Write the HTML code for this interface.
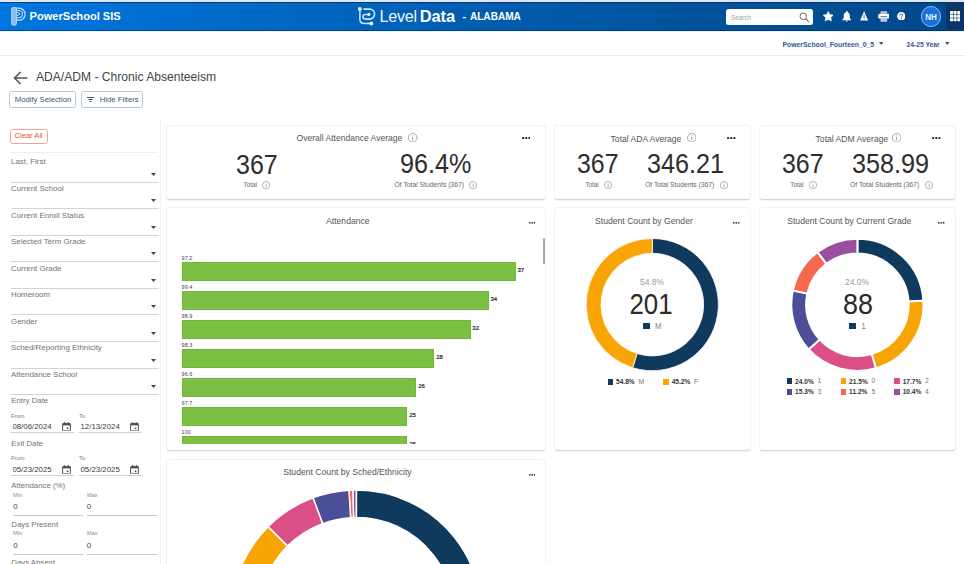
<!DOCTYPE html><html><head><meta charset="utf-8"><style>
html,body{margin:0;padding:0;background:#fff;width:964px;height:564px;overflow:hidden;position:relative;font-family:"Liberation Sans",sans-serif}
.t{position:absolute;line-height:1;white-space:nowrap}
</style></head><body>
<div style="position:absolute;left:0px;top:0px;width:964px;height:2px;background:#dfe7f3"></div>
<div style="position:absolute;left:0px;top:2px;width:964px;height:29px;background:linear-gradient(90deg,#0076e0 0px,#006ed0 146px,#0066c0 306px,#00539c 686px,#004a8c 910px,#00478a 964px)"></div>
<div style="position:absolute;left:0px;top:2px;width:964px;height:1px;background:rgba(0,30,80,.55)"></div>
<div style="position:absolute;left:0px;top:30px;width:964px;height:1px;background:rgba(0,25,70,.45)"></div>
<div style="position:absolute;left:0px;top:31px;width:964px;height:1px;background:#e9f4ff"></div>
<div style="position:absolute;left:945.7px;top:2px;width:18.3px;height:29px;background:#0a3566"></div>
<svg style="position:absolute;left:8px;top:4px" width="22" height="24" viewBox="0 0 22 24">
<rect x="3.5" y="3.4" width="5" height="17.8" rx="1.6" fill="#8dbbf0" stroke="#c0dbfa" stroke-width=".8"/>
<path d="M8.2 4.2 H11.1 A6 6 0 0 1 11.1 16.2 H8.2" fill="none" stroke="#c6e0fb" stroke-width="1.25"/>
<path d="M8.6 6.5 H10.9 A3.6 3.6 0 0 1 10.9 13.7 H8.6" fill="none" stroke="#c6e0fb" stroke-width="1.15"/>
<path d="M9.1 8.1 L11.9 9.9 L9.1 11.8" fill="none" stroke="#c6e0fb" stroke-width="1"/>
</svg>
<div class="t" style="left:29.50px;top:11.00px;font-size:11.1px;color:#fff;font-weight:700;">PowerSchool SIS</div>
<svg style="position:absolute;left:355px;top:5px" width="24" height="23" viewBox="0 0 24 23">
<g fill="none" stroke="#cde6ff" stroke-width="1.55" stroke-linecap="round">
<path d="M4.9 3.9 V14.3 Q4.9 18.5 9.1 18.5 H16.3"/>
<path d="M8.9 4.1 H14.6 A5 5 0 0 1 14.6 14.1 H10.6 Q7.8 14.1 7.8 11.6 Q7.8 9.4 10.6 9.4 H13.9"/>
</g>
<circle cx="4.9" cy="3.9" r="2" fill="#dcefe6"/>
<circle cx="16.3" cy="18.5" r="2" fill="#dcefe6"/>
<circle cx="13.9" cy="9.4" r="1.6" fill="#dcefe6"/>
</svg>
<div class="t" style="left:379.60px;top:8.49px;font-size:16.2px;color:#eaf4ff;letter-spacing:-0.3px;">Level</div>
<div class="t" style="left:419.80px;top:8.32px;font-size:16.4px;color:#fff;font-weight:700;letter-spacing:-0.1px;">Data</div>
<div class="t" style="left:462.50px;top:11.63px;font-size:10px;color:#fff;font-weight:700;">-</div>
<div class="t" style="left:469.90px;top:11.55px;font-size:10.1px;color:#fff;font-weight:700;">ALABAMA</div>
<div style="position:absolute;left:725.7px;top:8.7px;width:87.7px;height:16.6px;background:#fff;border-radius:2.5px"></div>
<div class="t" style="left:730.90px;transform:scaleX(0.94);transform-origin:0 0;top:14.53px;font-size:6.7px;color:#a0a0a0;">Search</div>
<svg style="position:absolute;left:799px;top:12px" width="11" height="11" viewBox="0 0 11 11">
<circle cx="4.3" cy="4.3" r="3.3" fill="none" stroke="#666" stroke-width="1"/>
<path d="M6.7 6.7 L9.8 9.8" stroke="#666" stroke-width="1.1"/></svg>
<svg style="position:absolute;left:822.5px;top:10.5px" width="10.5" height="11" viewBox="0 0 10.5 11">
<path d="M5.25 0.40 L6.87 3.53 L10.34 4.10 L7.87 6.60 L8.39 10.08 L5.25 8.50 L2.11 10.08 L2.63 6.60 L0.16 4.10 L3.63 3.53Z" fill="#fff" stroke="#fff" stroke-width=".5" stroke-linejoin="round"/></svg>
<svg style="position:absolute;left:841.5px;top:10.5px" width="9.5" height="11" viewBox="0 0 19 22">
<circle cx="9.5" cy="2.2" r="2" fill="#fff"/>
<path d="M9.5 2.6 Q3.4 2.6 3.4 9.6 V13.4 Q3.4 15.4 0.8 17 V18.3 H18.2 V17 Q15.6 15.4 15.6 13.4 V9.6 Q15.6 2.6 9.5 2.6Z" fill="#fff"/>
<rect x="8" y="18.3" width="3" height="3" rx="1" fill="#dfe9f5"/></svg>
<svg style="position:absolute;left:860.4px;top:11px" width="8.2" height="9.6" viewBox="0 0 16.4 19.2">
<path d="M8.2 0.6 L16.2 18.8 H0.2 Z" fill="#fff"/>
<rect x="7.4" y="7.5" width="1.6" height="6.5" fill="#233f66"/><rect x="7.4" y="15.2" width="1.6" height="1.6" fill="#233f66"/></svg>
<svg style="position:absolute;left:877.6px;top:10.8px" width="11.6" height="11" viewBox="0 0 23.2 22">
<rect x="5" y="0.3" width="13.2" height="5" rx="1.2" fill="#b9cbe3"/>
<rect x="0.3" y="5.3" width="22.6" height="10" rx="3.5" fill="#fff"/>
<rect x="5" y="10.5" width="13.2" height="1.6" fill="#3d5f8c"/>
<rect x="5" y="13.5" width="13.2" height="8.2" rx="1" fill="#b9cbe3"/></svg>
<svg style="position:absolute;left:896.9px;top:11.8px" width="8.6" height="8.6" viewBox="0 0 20 20">
<circle cx="10" cy="10" r="9.8" fill="#fff"/>
<path d="M6.9 7.7 Q6.9 4.6 10 4.6 Q13.2 4.6 13.2 7.4 Q13.2 9 11.2 10 Q10.2 10.6 10.2 12.2" fill="none" stroke="#2a4a78" stroke-width="2"/>
<circle cx="10.2" cy="15.2" r="1.3" fill="#2a4a78"/></svg>
<div style="position:absolute;left:920.6px;top:6.3px;width:20.4px;height:20.4px;box-sizing:border-box;border-radius:50%;background:#1a70d8;border:1.7px solid #8fc0f6"></div>
<div class="t" style="left:931.10px;transform:translateX(-50%) scaleX(0.97);top:12.87px;font-size:8.3px;color:#eef6ff;font-weight:700;">NH</div>
<svg style="position:absolute;left:950px;top:11.2px" width="10.4" height="10.4" viewBox="0 0 10.4 10.4"><rect x="0.0" y="0.0" width="3.1" height="3.1" rx=".5" fill="#fff"/><rect x="3.6" y="0.0" width="3.1" height="3.1" rx=".5" fill="#fff"/><rect x="7.2" y="0.0" width="3.1" height="3.1" rx=".5" fill="#fff"/><rect x="0.0" y="3.6" width="3.1" height="3.1" rx=".5" fill="#fff"/><rect x="3.6" y="3.6" width="3.1" height="3.1" rx=".5" fill="#fff"/><rect x="7.2" y="3.6" width="3.1" height="3.1" rx=".5" fill="#fff"/><rect x="0.0" y="7.2" width="3.1" height="3.1" rx=".5" fill="#fff"/><rect x="3.6" y="7.2" width="3.1" height="3.1" rx=".5" fill="#fff"/><rect x="7.2" y="7.2" width="3.1" height="3.1" rx=".5" fill="#fff"/></svg>
<div class="t" style="left:782.50px;top:41.70px;font-size:6.85px;color:#2a5a90;font-weight:700;">PowerSchool_Fourteen_0_5</div>
<svg style="position:absolute;left:878.6px;top:41.8px" width="4.6" height="3" viewBox="0 0 4.6 3"><path d="M0 0H4.6L2.3 3Z" fill="#2a5a90"/></svg>
<div class="t" style="left:906.40px;top:41.79px;font-size:6.75px;color:#2a5a90;font-weight:700;">24-25 Year</div>
<svg style="position:absolute;left:945.3px;top:41.8px" width="4.6" height="3" viewBox="0 0 4.6 3"><path d="M0 0H4.6L2.3 3Z" fill="#2a5a90"/></svg>
<div style="position:absolute;left:0px;top:55px;width:964px;height:1px;background:#e9ecef"></div>
<svg style="position:absolute;left:13px;top:70.5px" width="15" height="14" viewBox="0 0 15 14">
<path d="M14.5 7 H1.8 M7.6 1 L1.5 7 L7.6 13" fill="none" stroke="#555" stroke-width="1.6"/></svg>
<div class="t" style="left:36.00px;top:70.86px;font-size:12.1px;color:#444;">ADA/ADM - Chronic Absenteeism</div>
<div style="position:absolute;left:9.2px;top:91.3px;width:66.5px;height:16.3px;box-sizing:border-box;border:1px solid #b9c8d3;border-radius:2.5px"></div>
<div class="t" style="left:14.80px;top:95.78px;font-size:7.7px;color:#3d566b;">Modify Selection</div>
<div style="position:absolute;left:80.5px;top:91.3px;width:62.9px;height:16.3px;box-sizing:border-box;border:1px solid #b9c8d3;border-radius:2.5px"></div>
<svg style="position:absolute;left:87px;top:97.3px" width="7" height="5" viewBox="0 0 7 5"><path d="M0 .5H7M1.4 2.5H5.6M2.6 4.5H4.4" stroke="#3d566b" stroke-width="1"/></svg>
<div class="t" style="left:99.80px;top:95.78px;font-size:7.7px;color:#3d566b;">Hide Filters</div>
<div style="position:absolute;left:160px;top:118px;width:1px;height:446px;background:#f3f3f3"></div>
<div style="position:absolute;left:9.6px;top:128.5px;width:38.4px;height:15.9px;box-sizing:border-box;border:1px solid #f0a58e;border-radius:2.5px"></div>
<div class="t" style="left:14.50px;top:132.27px;font-size:7.6px;color:#e8582c;">Clear All</div>
<div style="position:absolute;left:10px;top:151.5px;width:148px;height:1px;background:#eeeeee"></div>
<div class="t" style="left:11.00px;top:158.41px;font-size:7.9px;color:#737373;">Last, First</div>
<div style="position:absolute;left:11px;top:182px;width:147.5px;height:1px;background:#d3d3d3"></div>
<svg style="position:absolute;left:150.5px;top:173.2px" width="5" height="3" viewBox="0 0 5 3"><path d="M0 0H5L2.5 3Z" fill="#444"/></svg>
<div class="t" style="left:11.00px;top:184.96px;font-size:7.9px;color:#737373;">Current School</div>
<div style="position:absolute;left:11px;top:208px;width:147.5px;height:1px;background:#d3d3d3"></div>
<svg style="position:absolute;left:150.5px;top:199.2px" width="5" height="3" viewBox="0 0 5 3"><path d="M0 0H5L2.5 3Z" fill="#444"/></svg>
<div class="t" style="left:11.00px;top:211.51px;font-size:7.9px;color:#737373;">Current Enroll Status</div>
<div style="position:absolute;left:11px;top:235px;width:147.5px;height:1px;background:#d3d3d3"></div>
<svg style="position:absolute;left:150.5px;top:226.2px" width="5" height="3" viewBox="0 0 5 3"><path d="M0 0H5L2.5 3Z" fill="#444"/></svg>
<div class="t" style="left:11.00px;top:238.06px;font-size:7.9px;color:#737373;">Selected Term Grade</div>
<div style="position:absolute;left:11px;top:261px;width:147.5px;height:1px;background:#d3d3d3"></div>
<svg style="position:absolute;left:150.5px;top:252.2px" width="5" height="3" viewBox="0 0 5 3"><path d="M0 0H5L2.5 3Z" fill="#444"/></svg>
<div class="t" style="left:11.00px;top:264.61px;font-size:7.9px;color:#737373;">Current Grade</div>
<div style="position:absolute;left:11px;top:288px;width:147.5px;height:1px;background:#d3d3d3"></div>
<svg style="position:absolute;left:150.5px;top:279.2px" width="5" height="3" viewBox="0 0 5 3"><path d="M0 0H5L2.5 3Z" fill="#444"/></svg>
<div class="t" style="left:11.00px;top:291.16px;font-size:7.9px;color:#737373;">Homeroom</div>
<div style="position:absolute;left:11px;top:314px;width:147.5px;height:1px;background:#d3d3d3"></div>
<svg style="position:absolute;left:150.5px;top:305.2px" width="5" height="3" viewBox="0 0 5 3"><path d="M0 0H5L2.5 3Z" fill="#444"/></svg>
<div class="t" style="left:11.00px;top:317.71px;font-size:7.9px;color:#737373;">Gender</div>
<div style="position:absolute;left:11px;top:341px;width:147.5px;height:1px;background:#d3d3d3"></div>
<svg style="position:absolute;left:150.5px;top:332.2px" width="5" height="3" viewBox="0 0 5 3"><path d="M0 0H5L2.5 3Z" fill="#444"/></svg>
<div class="t" style="left:11.00px;top:344.26px;font-size:7.9px;color:#737373;">Sched/Reporting Ethnicity</div>
<div style="position:absolute;left:11px;top:368px;width:147.5px;height:1px;background:#d3d3d3"></div>
<svg style="position:absolute;left:150.5px;top:359.2px" width="5" height="3" viewBox="0 0 5 3"><path d="M0 0H5L2.5 3Z" fill="#444"/></svg>
<div class="t" style="left:11.00px;top:370.81px;font-size:7.9px;color:#737373;">Attendance School</div>
<div style="position:absolute;left:11px;top:394px;width:147.5px;height:1px;background:#d3d3d3"></div>
<svg style="position:absolute;left:150.5px;top:385.2px" width="5" height="3" viewBox="0 0 5 3"><path d="M0 0H5L2.5 3Z" fill="#444"/></svg>
<div class="t" style="left:11.30px;top:397.00px;font-size:7.8px;color:#737373;">Entry Date</div>
<div class="t" style="left:11.30px;transform:scaleX(0.95);transform-origin:0 0;top:413.04px;font-size:6.1px;color:#777;">From</div>
<div class="t" style="left:79.30px;transform:scaleX(0.95);transform-origin:0 0;top:413.04px;font-size:6.1px;color:#777;">To</div>
<div class="t" style="left:12.40px;top:422.85px;font-size:7.85px;color:#3b3b3b;">08/06/2024</div>
<div class="t" style="left:80.50px;top:422.85px;font-size:7.85px;color:#3b3b3b;">12/13/2024</div>
<svg style="position:absolute;left:62.2px;top:421.9px" width="9" height="9.5" viewBox="0 0 18 19">
<rect x="1.2" y="2.8" width="15.6" height="15" rx="1.6" fill="none" stroke="#505050" stroke-width="2"/>
<rect x="1.2" y="2.8" width="15.6" height="4" fill="#505050"/>
<rect x="4.2" y="0.3" width="2" height="4" fill="#505050"/><rect x="11.8" y="0.3" width="2" height="4" fill="#505050"/>
<rect x="9.5" y="11" width="3.2" height="3.2" fill="#505050"/></svg>
<svg style="position:absolute;left:129.5px;top:421.9px" width="9" height="9.5" viewBox="0 0 18 19">
<rect x="1.2" y="2.8" width="15.6" height="15" rx="1.6" fill="none" stroke="#505050" stroke-width="2"/>
<rect x="1.2" y="2.8" width="15.6" height="4" fill="#505050"/>
<rect x="4.2" y="0.3" width="2" height="4" fill="#505050"/><rect x="11.8" y="0.3" width="2" height="4" fill="#505050"/>
<rect x="9.5" y="11" width="3.2" height="3.2" fill="#505050"/></svg>
<div style="position:absolute;left:11.3px;top:432px;width:62.6px;height:1px;background:#d0d0d0"></div>
<div style="position:absolute;left:78.8px;top:432px;width:62.2px;height:1px;background:#d0d0d0"></div>
<div class="t" style="left:11.30px;top:439.50px;font-size:7.8px;color:#737373;">Exit Date</div>
<div class="t" style="left:11.30px;transform:scaleX(0.95);transform-origin:0 0;top:455.34px;font-size:6.1px;color:#777;">From</div>
<div class="t" style="left:79.30px;transform:scaleX(0.95);transform-origin:0 0;top:455.34px;font-size:6.1px;color:#777;">To</div>
<div class="t" style="left:12.40px;top:465.55px;font-size:7.85px;color:#3b3b3b;">05/23/2025</div>
<div class="t" style="left:80.50px;top:465.55px;font-size:7.85px;color:#3b3b3b;">05/23/2025</div>
<svg style="position:absolute;left:62.2px;top:464.6px" width="9" height="9.5" viewBox="0 0 18 19">
<rect x="1.2" y="2.8" width="15.6" height="15" rx="1.6" fill="none" stroke="#505050" stroke-width="2"/>
<rect x="1.2" y="2.8" width="15.6" height="4" fill="#505050"/>
<rect x="4.2" y="0.3" width="2" height="4" fill="#505050"/><rect x="11.8" y="0.3" width="2" height="4" fill="#505050"/>
<rect x="9.5" y="11" width="3.2" height="3.2" fill="#505050"/></svg>
<svg style="position:absolute;left:129.5px;top:464.6px" width="9" height="9.5" viewBox="0 0 18 19">
<rect x="1.2" y="2.8" width="15.6" height="15" rx="1.6" fill="none" stroke="#505050" stroke-width="2"/>
<rect x="1.2" y="2.8" width="15.6" height="4" fill="#505050"/>
<rect x="4.2" y="0.3" width="2" height="4" fill="#505050"/><rect x="11.8" y="0.3" width="2" height="4" fill="#505050"/>
<rect x="9.5" y="11" width="3.2" height="3.2" fill="#505050"/></svg>
<div style="position:absolute;left:11.3px;top:475px;width:62.6px;height:1px;background:#d0d0d0"></div>
<div style="position:absolute;left:78.8px;top:475px;width:62.2px;height:1px;background:#d0d0d0"></div>
<div class="t" style="left:11.30px;top:482.40px;font-size:7.8px;color:#737373;">Attendance (%)</div>
<div class="t" style="left:13.30px;transform:scaleX(0.95);transform-origin:0 0;top:492.61px;font-size:5.9px;color:#888;">Min</div>
<div class="t" style="left:86.80px;transform:scaleX(0.95);transform-origin:0 0;top:492.61px;font-size:5.9px;color:#888;">Max</div>
<div class="t" style="left:13.30px;top:503.35px;font-size:7.85px;color:#3b3b3b;">0</div>
<div class="t" style="left:86.80px;top:503.35px;font-size:7.85px;color:#3b3b3b;">0</div>
<div style="position:absolute;left:13.3px;top:515.3px;width:69.7px;height:1px;background:#c9c9c9"></div>
<div style="position:absolute;left:86.6px;top:515.3px;width:70.2px;height:1px;background:#c9c9c9"></div>
<div class="t" style="left:11.30px;top:520.90px;font-size:7.8px;color:#737373;">Days Present</div>
<div class="t" style="left:13.30px;transform:scaleX(0.95);transform-origin:0 0;top:531.11px;font-size:5.9px;color:#888;">Min</div>
<div class="t" style="left:86.80px;transform:scaleX(0.95);transform-origin:0 0;top:531.11px;font-size:5.9px;color:#888;">Max</div>
<div class="t" style="left:13.30px;top:541.85px;font-size:7.85px;color:#3b3b3b;">0</div>
<div class="t" style="left:86.80px;top:541.85px;font-size:7.85px;color:#3b3b3b;">0</div>
<div style="position:absolute;left:13.3px;top:553.8px;width:69.7px;height:1px;background:#c9c9c9"></div>
<div style="position:absolute;left:86.6px;top:553.8px;width:70.2px;height:1px;background:#c9c9c9"></div>
<div class="t" style="left:11.30px;top:558.90px;font-size:7.8px;color:#737373;">Days Absent</div>
<div style="position:absolute;left:167px;top:126px;width:378px;height:72.5px;background:#fff;border-radius:2px;box-shadow:0 0.8px 1.6px rgba(0,0,0,.2), 0 0 1px rgba(0,0,0,.09)"></div>
<div style="position:absolute;left:555px;top:126px;width:195px;height:72.5px;background:#fff;border-radius:2px;box-shadow:0 0.8px 1.6px rgba(0,0,0,.2), 0 0 1px rgba(0,0,0,.09)"></div>
<div style="position:absolute;left:760px;top:126px;width:195px;height:72.5px;background:#fff;border-radius:2px;box-shadow:0 0.8px 1.6px rgba(0,0,0,.2), 0 0 1px rgba(0,0,0,.09)"></div>
<div class="t" style="left:296.50px;top:134.05px;font-size:8.56px;color:#555;">Overall Attendance Average</div>
<svg style="position:absolute;left:408.35px;top:132.85px" width="9.5" height="9.5" viewBox="0 0 20 20">
<circle cx="10" cy="10" r="9" fill="none" stroke="#777" stroke-width="1.3"/>
<rect x="9.2" y="8.5" width="1.6" height="6.5" fill="#777"/><circle cx="10" cy="5.8" r="1" fill="#777"/></svg>
<svg style="position:absolute;left:521.8px;top:136.88px" width="8.54" height="2.24"><circle cx="1.12" cy="1.12" r="1.12" fill="#222"/><circle cx="4.27" cy="1.12" r="1.12" fill="#222"/><circle cx="7.42" cy="1.12" r="1.12" fill="#222"/></svg>
<div class="t" style="left:236.00px;transform:scaleX(0.91);transform-origin:0 0;top:150.52px;font-size:27.5px;color:#2e2e2e;">367</div>
<div class="t" style="left:400.00px;transform:scaleX(0.915);transform-origin:0 0;top:150.32px;font-size:27.5px;color:#2e2e2e;">96.4%</div>
<div class="t" style="left:243.50px;top:182.27px;font-size:6.3px;color:#666;">Total</div>
<svg style="position:absolute;left:261.50px;top:181.30px" width="8.2" height="8.2" viewBox="0 0 20 20">
<circle cx="10" cy="10" r="9" fill="none" stroke="#777" stroke-width="1.3"/>
<rect x="9.2" y="8.5" width="1.6" height="6.5" fill="#777"/><circle cx="10" cy="5.8" r="1" fill="#777"/></svg>
<div class="t" style="left:394.60px;top:181.89px;font-size:6.75px;color:#666;">Of Total Students (367)</div>
<svg style="position:absolute;left:468.60px;top:181.10px" width="8.2" height="8.2" viewBox="0 0 20 20">
<circle cx="10" cy="10" r="9" fill="none" stroke="#777" stroke-width="1.3"/>
<rect x="9.2" y="8.5" width="1.6" height="6.5" fill="#777"/><circle cx="10" cy="5.8" r="1" fill="#777"/></svg>
<div class="t" style="left:610.60px;top:134.54px;font-size:8.57px;color:#555;">Total ADA Average</div>
<svg style="position:absolute;left:686.65px;top:132.85px" width="9.5" height="9.5" viewBox="0 0 20 20">
<circle cx="10" cy="10" r="9" fill="none" stroke="#777" stroke-width="1.3"/>
<rect x="9.2" y="8.5" width="1.6" height="6.5" fill="#777"/><circle cx="10" cy="5.8" r="1" fill="#777"/></svg>
<svg style="position:absolute;left:727px;top:136.98px" width="8.54" height="2.24"><circle cx="1.12" cy="1.12" r="1.12" fill="#222"/><circle cx="4.27" cy="1.12" r="1.12" fill="#222"/><circle cx="7.42" cy="1.12" r="1.12" fill="#222"/></svg>
<div class="t" style="left:576.90px;transform:scaleX(0.91);transform-origin:0 0;top:149.90px;font-size:27.4px;color:#2e2e2e;">367</div>
<div class="t" style="left:646.80px;transform:scaleX(0.92);transform-origin:0 0;top:149.90px;font-size:27.4px;color:#2e2e2e;">346.21</div>
<div class="t" style="left:585.30px;top:182.27px;font-size:6.3px;color:#666;">Total</div>
<svg style="position:absolute;left:603.70px;top:181.30px" width="8.2" height="8.2" viewBox="0 0 20 20">
<circle cx="10" cy="10" r="9" fill="none" stroke="#777" stroke-width="1.3"/>
<rect x="9.2" y="8.5" width="1.6" height="6.5" fill="#777"/><circle cx="10" cy="5.8" r="1" fill="#777"/></svg>
<div class="t" style="left:645.00px;top:181.89px;font-size:6.75px;color:#666;">Of Total Students (367)</div>
<svg style="position:absolute;left:719.80px;top:181.10px" width="8.2" height="8.2" viewBox="0 0 20 20">
<circle cx="10" cy="10" r="9" fill="none" stroke="#777" stroke-width="1.3"/>
<rect x="9.2" y="8.5" width="1.6" height="6.5" fill="#777"/><circle cx="10" cy="5.8" r="1" fill="#777"/></svg>
<div class="t" style="left:815.60px;top:134.54px;font-size:8.57px;color:#555;">Total ADM Average</div>
<svg style="position:absolute;left:891.65px;top:132.85px" width="9.5" height="9.5" viewBox="0 0 20 20">
<circle cx="10" cy="10" r="9" fill="none" stroke="#777" stroke-width="1.3"/>
<rect x="9.2" y="8.5" width="1.6" height="6.5" fill="#777"/><circle cx="10" cy="5.8" r="1" fill="#777"/></svg>
<svg style="position:absolute;left:932px;top:136.98px" width="8.54" height="2.24"><circle cx="1.12" cy="1.12" r="1.12" fill="#222"/><circle cx="4.27" cy="1.12" r="1.12" fill="#222"/><circle cx="7.42" cy="1.12" r="1.12" fill="#222"/></svg>
<div class="t" style="left:781.90px;transform:scaleX(0.91);transform-origin:0 0;top:149.90px;font-size:27.4px;color:#2e2e2e;">367</div>
<div class="t" style="left:851.80px;transform:scaleX(0.92);transform-origin:0 0;top:149.90px;font-size:27.4px;color:#2e2e2e;">358.99</div>
<div class="t" style="left:790.30px;top:182.27px;font-size:6.3px;color:#666;">Total</div>
<svg style="position:absolute;left:808.70px;top:181.30px" width="8.2" height="8.2" viewBox="0 0 20 20">
<circle cx="10" cy="10" r="9" fill="none" stroke="#777" stroke-width="1.3"/>
<rect x="9.2" y="8.5" width="1.6" height="6.5" fill="#777"/><circle cx="10" cy="5.8" r="1" fill="#777"/></svg>
<div class="t" style="left:850.00px;top:181.89px;font-size:6.75px;color:#666;">Of Total Students (367)</div>
<svg style="position:absolute;left:924.80px;top:181.10px" width="8.2" height="8.2" viewBox="0 0 20 20">
<circle cx="10" cy="10" r="9" fill="none" stroke="#777" stroke-width="1.3"/>
<rect x="9.2" y="8.5" width="1.6" height="6.5" fill="#777"/><circle cx="10" cy="5.8" r="1" fill="#777"/></svg>
<div style="position:absolute;left:167px;top:208.3px;width:378px;height:242.1px;background:#fff;border-radius:2px;box-shadow:0 0.8px 1.6px rgba(0,0,0,.2), 0 0 1px rgba(0,0,0,.09)"></div>
<div style="position:absolute;left:555px;top:208.3px;width:195px;height:242.1px;background:#fff;border-radius:2px;box-shadow:0 0.8px 1.6px rgba(0,0,0,.2), 0 0 1px rgba(0,0,0,.09)"></div>
<div style="position:absolute;left:760px;top:208.3px;width:195px;height:242.1px;background:#fff;border-radius:2px;box-shadow:0 0.8px 1.6px rgba(0,0,0,.2), 0 0 1px rgba(0,0,0,.09)"></div>
<div class="t" style="left:326.00px;top:216.99px;font-size:8.64px;color:#555;">Attendance</div>
<svg style="position:absolute;left:528.6px;top:222.15px" width="6.6000000000000005" height="1.7"><circle cx="0.85" cy="0.85" r="0.85" fill="#222"/><circle cx="3.30" cy="0.85" r="0.85" fill="#222"/><circle cx="5.75" cy="0.85" r="0.85" fill="#222"/></svg>
<div style="position:absolute;left:167px;top:238px;width:378px;height:205.8px;overflow:hidden">
<div class="t" style="left:14.6px;top:18.40px;font-size:5.5px;color:#444">97.2</div>
<div style="position:absolute;left:14.6px;top:24.40px;width:334.11px;height:18.2px;box-sizing:border-box;background:#7bc043;border:0.6px solid #71b53c"></div>
<div class="t" style="left:350.51px;top:29.40px;font-size:6px;color:#111;-webkit-text-stroke:.15px #111">37</div>
<div class="t" style="left:14.6px;top:47.40px;font-size:5.5px;color:#444">99.4</div>
<div style="position:absolute;left:14.6px;top:53.40px;width:307.02px;height:18.2px;box-sizing:border-box;background:#7bc043;border:0.6px solid #71b53c"></div>
<div class="t" style="left:323.42px;top:58.40px;font-size:6px;color:#111;-webkit-text-stroke:.15px #111">34</div>
<div class="t" style="left:14.6px;top:76.40px;font-size:5.5px;color:#444">98.9</div>
<div style="position:absolute;left:14.6px;top:82.40px;width:288.96px;height:18.2px;box-sizing:border-box;background:#7bc043;border:0.6px solid #71b53c"></div>
<div class="t" style="left:305.36px;top:87.40px;font-size:6px;color:#111;-webkit-text-stroke:.15px #111">32</div>
<div class="t" style="left:14.6px;top:105.40px;font-size:5.5px;color:#444">98.3</div>
<div style="position:absolute;left:14.6px;top:111.40px;width:252.84px;height:18.2px;box-sizing:border-box;background:#7bc043;border:0.6px solid #71b53c"></div>
<div class="t" style="left:269.24px;top:116.40px;font-size:6px;color:#111;-webkit-text-stroke:.15px #111">28</div>
<div class="t" style="left:14.6px;top:134.40px;font-size:5.5px;color:#444">96.6</div>
<div style="position:absolute;left:14.6px;top:140.40px;width:234.78px;height:18.2px;box-sizing:border-box;background:#7bc043;border:0.6px solid #71b53c"></div>
<div class="t" style="left:251.18px;top:145.40px;font-size:6px;color:#111;-webkit-text-stroke:.15px #111">26</div>
<div class="t" style="left:14.6px;top:163.40px;font-size:5.5px;color:#444">97.7</div>
<div style="position:absolute;left:14.6px;top:169.40px;width:225.75px;height:18.2px;box-sizing:border-box;background:#7bc043;border:0.6px solid #71b53c"></div>
<div class="t" style="left:242.15px;top:174.40px;font-size:6px;color:#111;-webkit-text-stroke:.15px #111">25</div>
<div class="t" style="left:14.6px;top:192.40px;font-size:5.5px;color:#444">100</div>
<div style="position:absolute;left:14.6px;top:198.40px;width:225.75px;height:18.2px;box-sizing:border-box;background:#7bc043;border:0.6px solid #71b53c"></div>
<div class="t" style="left:242.15px;top:203.40px;font-size:6px;color:#111;-webkit-text-stroke:.15px #111">25</div>
</div>
<div style="position:absolute;left:543.2px;top:238.4px;width:1.7px;height:25.3px;background:#a8a8a8;border-radius:1px"></div>
<div class="t" style="left:595.00px;top:216.99px;font-size:8.64px;color:#555;">Student Count by Gender</div>
<svg style="position:absolute;left:733.4px;top:221.95000000000002px" width="6.6000000000000005" height="1.7"><circle cx="0.85" cy="0.85" r="0.85" fill="#222"/><circle cx="3.30" cy="0.85" r="0.85" fill="#222"/><circle cx="5.75" cy="0.85" r="0.85" fill="#222"/></svg>
<div class="t" style="left:787.20px;top:216.99px;font-size:8.64px;color:#555;">Student Count by Current Grade</div>
<svg style="position:absolute;left:938.4px;top:221.95000000000002px" width="6.6000000000000005" height="1.7"><circle cx="0.85" cy="0.85" r="0.85" fill="#222"/><circle cx="3.30" cy="0.85" r="0.85" fill="#222"/><circle cx="5.75" cy="0.85" r="0.85" fill="#222"/></svg>
<svg style="position:absolute;left:0;top:0" width="964" height="564"><path d="M652.30 238.50 A66.1 66.1 0 1 1 632.67 367.72 L637.06 353.58 A51.3 51.3 0 1 0 652.30 253.30Z" fill="#0f3a5e" stroke="#fff" stroke-width="0.8" stroke-linejoin="miter"/><path d="M632.67 367.72 A66.1 66.1 0 0 1 652.30 238.50 L652.30 253.30 A51.3 51.3 0 0 0 637.06 353.58Z" fill="#f8a404" stroke="#fff" stroke-width="0.8" stroke-linejoin="miter"/><path d="M857.40 238.70 A66.1 66.1 0 0 1 923.37 300.65 L908.60 301.58 A51.3 51.3 0 0 0 857.40 253.50Z" fill="#0f3a5e" stroke="#fff" stroke-width="2.0" stroke-linejoin="miter"/><path d="M923.37 300.65 A66.1 66.1 0 0 1 875.84 368.28 L871.71 354.06 A51.3 51.3 0 0 0 908.60 301.58Z" fill="#f8a404" stroke="#fff" stroke-width="2.0" stroke-linejoin="miter"/><path d="M875.84 368.28 A66.1 66.1 0 0 1 808.65 349.44 L819.57 339.44 A51.3 51.3 0 0 0 871.71 354.06Z" fill="#dc4f86" stroke="#fff" stroke-width="2.0" stroke-linejoin="miter"/><path d="M808.65 349.44 A66.1 66.1 0 0 1 792.89 290.38 L807.34 293.61 A51.3 51.3 0 0 0 819.57 339.44Z" fill="#4b4f97" stroke="#fff" stroke-width="2.0" stroke-linejoin="miter"/><path d="M792.89 290.38 A66.1 66.1 0 0 1 817.55 252.07 L826.47 263.87 A51.3 51.3 0 0 0 807.34 293.61Z" fill="#f6694f" stroke="#fff" stroke-width="2.0" stroke-linejoin="miter"/><path d="M817.55 252.07 A66.1 66.1 0 0 1 857.40 238.70 L857.40 253.50 A51.3 51.3 0 0 0 826.47 263.87Z" fill="#994fa0" stroke="#fff" stroke-width="2.0" stroke-linejoin="miter"/></svg>
<div class="t" style="left:652.30px;transform:translateX(-50%) scaleX(0.95);top:278.07px;font-size:8.9px;color:#999;">54.8%</div>
<div class="t" style="left:651.30px;transform:translateX(-50%) scaleX(0.885);top:289.88px;font-size:29.2px;color:#2a2a2a;">201</div>
<div style="position:absolute;left:643px;top:323px;width:6.5px;height:6px;background:#0f3a5e"></div>
<div class="t" style="left:655.20px;transform:scaleX(0.92);transform-origin:0 0;top:321.57px;font-size:8.3px;color:#888;">M</div>
<div class="t" style="left:857.00px;transform:translateX(-50%) scaleX(0.95);top:278.07px;font-size:8.9px;color:#999;">24.0%</div>
<div class="t" style="left:857.50px;transform:translateX(-50%) scaleX(0.91);top:288.84px;font-size:29.6px;color:#2a2a2a;">88</div>
<div style="position:absolute;left:849.4px;top:323px;width:6.9px;height:6px;background:#0f3a5e"></div>
<div class="t" style="left:861.20px;top:321.57px;font-size:8.3px;color:#888;">1</div>
<div style="position:absolute;left:607.5px;top:378.6px;width:5.8px;height:6px;background:#0f3a5e"></div>
<div class="t" style="left:616.00px;top:378.81px;font-size:6.6px;color:#333;font-weight:700;">54.8%</div>
<div class="t" style="left:638.40px;top:378.64px;font-size:6.8px;color:#777;">M</div>
<div style="position:absolute;left:663.2px;top:378.6px;width:5.8px;height:6px;background:#f8a404"></div>
<div class="t" style="left:671.70px;top:378.81px;font-size:6.6px;color:#333;font-weight:700;">45.2%</div>
<div class="t" style="left:694.10px;top:378.64px;font-size:6.8px;color:#777;">F</div>
<div style="position:absolute;left:786.6px;top:378.4px;width:5.8px;height:6px;background:#0f3a5e"></div>
<div class="t" style="left:795.10px;top:378.61px;font-size:6.6px;color:#333;font-weight:700;">24.0%</div>
<div class="t" style="left:817.50px;top:378.44px;font-size:6.8px;color:#777;">1</div>
<div style="position:absolute;left:840.6px;top:378.4px;width:5.8px;height:6px;background:#f8a404"></div>
<div class="t" style="left:849.10px;top:378.61px;font-size:6.6px;color:#333;font-weight:700;">21.5%</div>
<div class="t" style="left:871.50px;top:378.44px;font-size:6.8px;color:#777;">0</div>
<div style="position:absolute;left:894.2px;top:378.4px;width:5.8px;height:6px;background:#dc4f86"></div>
<div class="t" style="left:902.70px;top:378.61px;font-size:6.6px;color:#333;font-weight:700;">17.7%</div>
<div class="t" style="left:925.10px;top:378.44px;font-size:6.8px;color:#777;">2</div>
<div style="position:absolute;left:786.6px;top:389px;width:5.8px;height:6px;background:#4b4f97"></div>
<div class="t" style="left:795.10px;top:389.21px;font-size:6.6px;color:#333;font-weight:700;">15.3%</div>
<div class="t" style="left:817.50px;top:389.04px;font-size:6.8px;color:#777;">3</div>
<div style="position:absolute;left:840.6px;top:389px;width:5.8px;height:6px;background:#f6694f"></div>
<div class="t" style="left:849.10px;top:389.21px;font-size:6.6px;color:#333;font-weight:700;">11.2%</div>
<div class="t" style="left:871.50px;top:389.04px;font-size:6.8px;color:#777;">5</div>
<div style="position:absolute;left:894.2px;top:389px;width:5.8px;height:6px;background:#994fa0"></div>
<div class="t" style="left:902.70px;top:389.21px;font-size:6.6px;color:#333;font-weight:700;">10.4%</div>
<div class="t" style="left:925.10px;top:389.04px;font-size:6.8px;color:#777;">4</div>
<div style="position:absolute;left:167px;top:459.8px;width:378px;height:120px;background:#fff;border-radius:2px;box-shadow:0 0.8px 1.6px rgba(0,0,0,.2), 0 0 1px rgba(0,0,0,.09)"></div>
<div class="t" style="left:283.20px;top:467.99px;font-size:8.64px;color:#555;">Student Count by Sched/Ethnicity</div>
<svg style="position:absolute;left:528.5px;top:474.04999999999995px" width="6.6000000000000005" height="1.7"><circle cx="0.85" cy="0.85" r="0.85" fill="#222"/><circle cx="3.30" cy="0.85" r="0.85" fill="#222"/><circle cx="5.75" cy="0.85" r="0.85" fill="#222"/></svg>
<svg style="position:absolute;left:0;top:0" width="964" height="564"><path d="M352.73 490.06 A125 125 0 0 1 356.50 490.00 L356.50 517.50 A97.5 97.5 0 0 0 353.56 517.54Z" fill="#994fa0" stroke="#fff" stroke-width="1.5" stroke-linejoin="miter"/><path d="M348.96 490.23 A125 125 0 0 1 352.73 490.06 L353.56 517.54 A97.5 97.5 0 0 0 350.62 517.68Z" fill="#f6694f" stroke="#fff" stroke-width="1.5" stroke-linejoin="miter"/><path d="M312.98 497.82 A125 125 0 0 1 348.96 490.23 L350.62 517.68 A97.5 97.5 0 0 0 322.55 523.60Z" fill="#4b4f97" stroke="#fff" stroke-width="1.5" stroke-linejoin="miter"/><path d="M268.06 526.67 A125 125 0 0 1 312.98 497.82 L322.55 523.60 A97.5 97.5 0 0 0 287.51 546.10Z" fill="#dc4f86" stroke="#fff" stroke-width="1.5" stroke-linejoin="miter"/><path d="M299.82 726.41 A125 125 0 0 1 268.06 526.67 L287.51 546.10 A97.5 97.5 0 0 0 312.29 701.90Z" fill="#f8a404" stroke="#fff" stroke-width="1.5" stroke-linejoin="miter"/><path d="M356.42 490.00 A125 125 0 1 1 299.82 726.41 L312.29 701.90 A97.5 97.5 0 1 0 356.44 517.50Z" fill="#0f3a5e" stroke="#fff" stroke-width="1.5" stroke-linejoin="miter"/></svg>
</body></html>
